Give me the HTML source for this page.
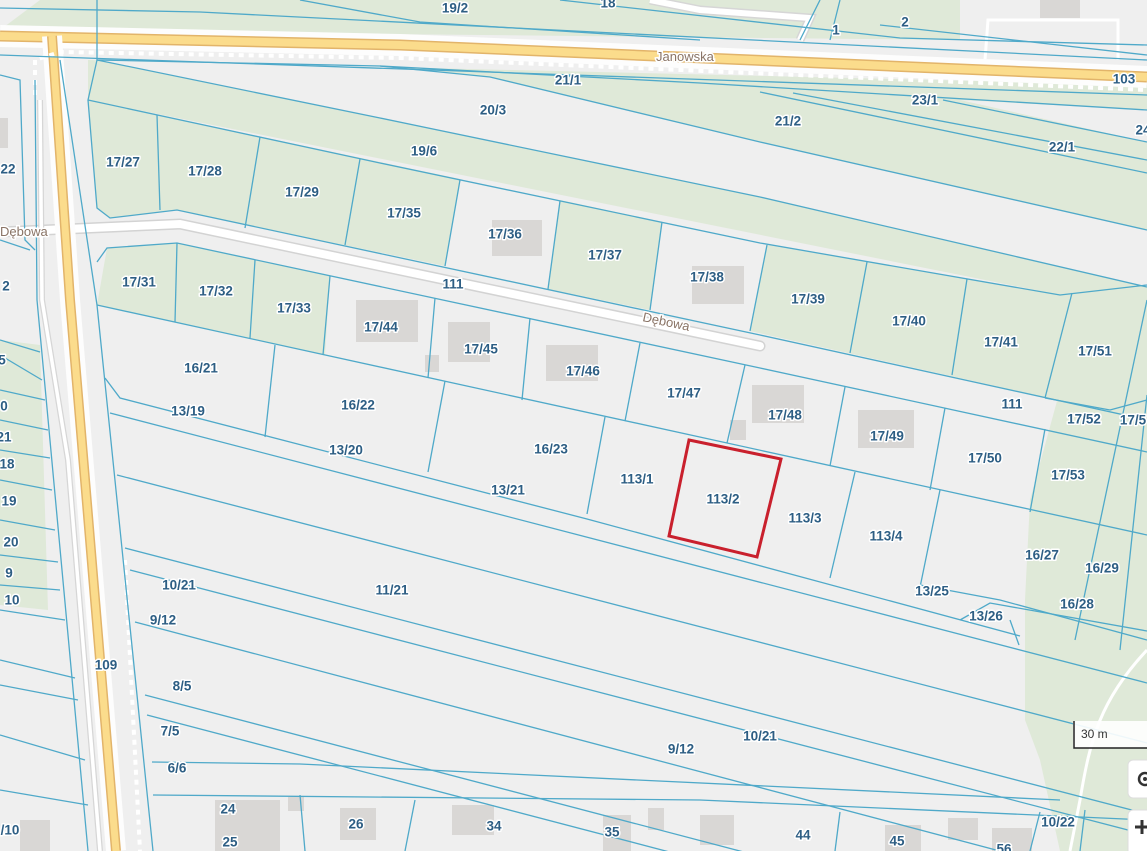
<!DOCTYPE html>
<html><head><meta charset="utf-8"><style>
html,body{margin:0;padding:0;width:1147px;height:851px;overflow:hidden;background:#efefef}
svg{display:block}
.l{fill:none;stroke:#4fa9c9;stroke-width:1.3}
.t{font-family:"Liberation Sans",sans-serif;font-weight:bold;font-size:13.5px;fill:#2d5e84;text-anchor:middle;dominant-baseline:central;paint-order:stroke;stroke:#fff;stroke-width:3px;stroke-linejoin:round}
.r{font-family:"Liberation Sans",sans-serif;font-size:13px;fill:#8a7466;paint-order:stroke;stroke:#fff;stroke-width:3px}
.g{fill:#dfe9d8}
.b{fill:#d9d7d5}
</style></head><body>
<svg width="1147" height="851" viewBox="0 0 1147 851">
<rect width="1147" height="851" fill="#efefef"/>
<polygon class="g" points="40,0 960,0 960,40 0,30"/>
<rect x="980" y="0" width="167" height="60" fill="#efefef"/>
<polygon class="g" points="88,60 1147,85 1147,300 1060,295 88,100"/>
<!-- gray strip 20/3 -->
<polygon fill="#efefef" points="97,60 380,66 490,77 760,142 1147,230 1147,287 760,197 380,118"/>
<polygon fill="#efefef" points="960,100 1147,110 1147,142"/>
<polygon class="g" points="88,100 460,179 445,266 177,210 110,218 97,208"/>
<polygon class="g" points="560,200 662,222 650,310 548,289"/>
<polygon class="g" points="767,245 1060,295 1147,290 1147,420 750,331"/>
<polygon class="g" points="107,248 177,243 330,276 325,355 97,305"/>
<polygon class="g" points="1060,390 1147,380 1147,851 1060,851 1040,760 1025,720 1025,600 1030,500"/>
<polygon class="g" points="0,340 40,345 48,610 0,605"/>
<rect class="b" x="492" y="220" width="50" height="36"/>
<rect class="b" x="692" y="266" width="52" height="38"/>
<rect class="b" x="356" y="300" width="62" height="42"/>
<rect class="b" x="448" y="322" width="42" height="40"/>
<rect class="b" x="425" y="355" width="14" height="17"/>
<rect class="b" x="546" y="345" width="52" height="36"/>
<rect class="b" x="752" y="385" width="52" height="38"/>
<rect class="b" x="730" y="420" width="16" height="20"/>
<rect class="b" x="858" y="410" width="56" height="38"/>
<rect class="b" x="215" y="800" width="65" height="51"/>
<rect class="b" x="288" y="797" width="16" height="14"/>
<rect class="b" x="340" y="808" width="36" height="32"/>
<rect class="b" x="452" y="805" width="42" height="30"/>
<rect class="b" x="603" y="815" width="28" height="36"/>
<rect class="b" x="648" y="808" width="16" height="22"/>
<rect class="b" x="700" y="815" width="34" height="30"/>
<rect class="b" x="885" y="825" width="36" height="26"/>
<rect class="b" x="948" y="818" width="30" height="22"/>
<rect class="b" x="992" y="828" width="40" height="23"/>
<rect class="b" x="20" y="820" width="30" height="31"/>
<rect class="b" x="1040" y="0" width="40" height="18"/>
<rect class="b" x="0" y="118" width="8" height="30"/>
<polyline points="0,232 180,224 760,346" fill="none" stroke="#d3d3d3" stroke-width="11" stroke-linecap="round"/>
<polyline points="0,232 180,224 760,346" fill="none" stroke="#ffffff" stroke-width="8" stroke-linecap="round"/>
<polyline points="40,100 42,300 68,460 100,851" fill="none" stroke="#d6d6d6" stroke-width="6"/>
<polyline points="40,100 42,300 68,460 100,851" fill="none" stroke="#fff" stroke-width="3.5"/>
<polyline points="650,0 700,10 810,18 800,40" fill="none" stroke="#d6d6d6" stroke-width="9"/>
<polyline points="650,0 700,10 810,18 800,40" fill="none" stroke="#fff" stroke-width="6"/>
<polyline points="985,60 988,20 1118,20 1118,60" fill="none" stroke="#fff" stroke-width="3"/>
<path d="M1147,650 C1100,700 1090,740 1080,800 L1070,851" fill="none" stroke="#fff" stroke-width="3"/>
<polyline points="0,36 400,45 1147,77" fill="none" stroke="#fdfdfd" stroke-width="22"/>
<polyline points="0,36 400,45 1147,77" fill="none" stroke="#e2b46a" stroke-width="11"/>
<polyline points="0,36 400,45 1147,77" fill="none" stroke="#fbdc8c" stroke-width="8"/>
<polyline points="52,36 70,300 116,851" fill="none" stroke="#fdfdfd" stroke-width="20"/>
<polyline points="52,36 70,300 116,851" fill="none" stroke="#e2b46a" stroke-width="10"/>
<polyline points="52,36 70,300 116,851" fill="none" stroke="#fbdc8c" stroke-width="7"/>
<polyline points="35,95 35,60 60,52 400,58 1147,90" fill="none" stroke="#fff" stroke-width="4" stroke-dasharray="5,5"/>
<polyline points="125,560 140,851" fill="none" stroke="#fff" stroke-width="4" stroke-dasharray="5,5"/>
<g class="l">
<polyline points="0,8 200,12 1147,60"/>
<polyline points="300,0 420,22 700,40"/>
<polyline points="560,0 900,38 1147,45"/>
<polyline points="820,0 800,40"/>
<polyline points="840,0 830,40"/>
<polyline points="880,25 1147,55"/>
<polyline points="0,55 1147,95"/>
<polyline points="97,60 380,66 700,83 1147,110"/>
<polyline points="97,60 380,118 760,197 1147,287"/>
<polyline points="380,66 490,77 760,142 1147,230"/>
<polyline points="760,92 1147,173"/>
<polyline points="793,93 1147,160"/>
<polyline points="943,100 1147,142"/>
<polyline points="97,60 88,100 97,208 110,218 177,210 760,335 1147,420"/>
<polyline points="88,100 380,163 760,243 1060,295 1147,285"/>
<line x1="157" y1="115" x2="160" y2="210"/>
<line x1="260" y1="137" x2="245" y2="228"/>
<line x1="360" y1="159" x2="345" y2="245"/>
<line x1="460" y1="180" x2="445" y2="266"/>
<line x1="560" y1="201" x2="548" y2="289"/>
<line x1="662" y1="222" x2="650" y2="310"/>
<line x1="767" y1="245" x2="750" y2="331"/>
<line x1="867" y1="262" x2="850" y2="353"/>
<line x1="967" y1="279" x2="952" y2="375"/>
<line x1="1072" y1="293" x2="1045" y2="398"/>
<polyline points="97,262 107,248 177,243 760,368 1147,452"/>
<polyline points="97,305 1147,535"/>
<line x1="177" y1="243" x2="175" y2="322"/>
<line x1="255" y1="260" x2="250" y2="338"/>
<line x1="330" y1="276" x2="323" y2="355"/>
<line x1="435" y1="298" x2="428" y2="378"/>
<line x1="530" y1="318" x2="522" y2="400"/>
<line x1="640" y1="343" x2="625" y2="421"/>
<line x1="745" y1="365" x2="727" y2="443"/>
<line x1="845" y1="387" x2="830" y2="466"/>
<line x1="945" y1="408" x2="930" y2="490"/>
<line x1="1045" y1="429" x2="1030" y2="512"/>
<line x1="1147" y1="395" x2="1120" y2="650"/>
<line x1="1147" y1="300" x2="1075" y2="640"/>
<polyline points="1045,398 1110,410 1147,400"/>
<polyline points="105,378 120,398 587,519 1020,636"/>
<polyline points="110,413 1147,683"/>
<polyline points="117,475 1147,743"/>
<polyline points="125,548 1147,814"/>
<polyline points="130,570 1147,835"/>
<polyline points="135,622 1147,890"/>
<polyline points="145,695 900,893"/>
<polyline points="147,715 700,860"/>
<polyline points="152,762 300,764 1060,800"/>
<polyline points="153,795 700,800 1147,820"/>
<line x1="275" y1="345" x2="265" y2="437"/>
<line x1="445" y1="381" x2="428" y2="472"/>
<line x1="605" y1="417" x2="587" y2="514"/>
<line x1="855" y1="472" x2="830" y2="578"/>
<line x1="940" y1="490" x2="918" y2="597"/>
<polyline points="920,585 1000,600 1147,640"/>
<polyline points="960,620 990,603 1147,631"/>
<polyline points="1010,620 1019,645"/>
<polyline points="97,0 97,60"/>
<polyline points="35,80 37,300 88,851"/>
<polyline points="60,60 97,305 153,851"/>
<polyline points="0,75 20,80 25,240 35,250"/>
<polyline points="0,240 30,250"/>
<polyline points="0,340 40,352"/><polyline points="0,355 42,380"/><polyline points="0,390 45,400"/><polyline points="0,420 48,430"/>
<polyline points="0,450 50,458"/><polyline points="0,480 52,490"/><polyline points="0,520 55,530"/><polyline points="0,555 58,562"/>
<polyline points="0,585 60,590"/><polyline points="0,610 65,620"/>
<polyline points="0,660 75,678"/><polyline points="0,685 78,700"/><polyline points="0,735 85,760"/><polyline points="0,790 88,805"/>
<line x1="415" y1="800" x2="405" y2="851"/><line x1="300" y1="795" x2="305" y2="851"/><line x1="840" y1="812" x2="835" y2="851"/>
<line x1="1040" y1="812" x2="1030" y2="851"/><line x1="1085" y1="810" x2="1080" y2="851"/>
</g>
<polygon points="689,440 781,459 757,557 669,536" fill="none" stroke="#c9202d" stroke-width="3"/>
<g class="t">
<text x="455" y="8">19/2</text><text x="608" y="3">18</text><text x="905" y="22">2</text><text x="836" y="30">1</text>
<text x="1124" y="79">103</text><text x="568" y="80">21/1</text><text x="493" y="110">20/3</text><text x="925" y="100">23/1</text>
<text x="788" y="121">21/2</text><text x="1143" y="130">24</text><text x="1062" y="147">22/1</text><text x="424" y="151">19/6</text>
<text x="123" y="162">17/27</text><text x="205" y="171">17/28</text><text x="302" y="192">17/29</text><text x="404" y="213">17/35</text>
<text x="505" y="234">17/36</text><text x="605" y="255">17/37</text><text x="707" y="277">17/38</text><text x="808" y="299">17/39</text>
<text x="909" y="321">17/40</text><text x="1001" y="342">17/41</text><text x="1095" y="351">17/51</text><text x="8" y="169">22</text>
<text x="6" y="286">2</text><text x="139" y="282">17/31</text><text x="216" y="291">17/32</text><text x="294" y="308">17/33</text>
<text x="453" y="284">111</text><text x="381" y="327">17/44</text><text x="481" y="349">17/45</text><text x="583" y="371">17/46</text>
<text x="684" y="393">17/47</text><text x="785" y="415">17/48</text><text x="887" y="436">17/49</text><text x="985" y="458">17/50</text>
<text x="1012" y="404">111</text><text x="1084" y="419">17/52</text><text x="1133" y="420">17/5</text><text x="1068" y="475">17/53</text>
<text x="201" y="368">16/21</text><text x="188" y="411">13/19</text><text x="358" y="405">16/22</text><text x="551" y="449">16/23</text>
<text x="346" y="450">13/20</text><text x="637" y="479">113/1</text><text x="723" y="499">113/2</text><text x="805" y="518">113/3</text>
<text x="886" y="536">113/4</text><text x="508" y="490">13/21</text><text x="1042" y="555">16/27</text><text x="1102" y="568">16/29</text>
<text x="932" y="591">13/25</text><text x="1077" y="604">16/28</text><text x="986" y="616">13/26</text><text x="179" y="585">10/21</text>
<text x="392" y="590">11/21</text><text x="163" y="620">9/12</text><text x="182" y="686">8/5</text><text x="106" y="665">109</text>
<text x="170" y="731">7/5</text><text x="760" y="736">10/21</text><text x="681" y="749">9/12</text><text x="177" y="768">6/6</text>
<text x="228" y="809">24</text><text x="230" y="842">25</text><text x="356" y="824">26</text><text x="494" y="826">34</text>
<text x="612" y="832">35</text><text x="803" y="835">44</text><text x="897" y="841">45</text><text x="1004" y="849">56</text>
<text x="1058" y="822">10/22</text><text x="10" y="830">/10</text>
<text x="2" y="360">5</text><text x="4" y="406">0</text><text x="4" y="437">21</text><text x="7" y="464">18</text>
<text x="9" y="501">19</text><text x="11" y="542">20</text><text x="9" y="573">9</text><text x="12" y="600">10</text>
</g>
<text class="r" x="656" y="61">Janowska</text>
<text class="r" x="0" y="236">Dębowa</text>
<text class="r" x="642" y="321" transform="rotate(12 642 321)">Dębowa</text>
<rect x="1073" y="721" width="80" height="27" fill="#fff" fill-opacity="0.9"/>
<polyline points="1074,721 1074,748 1147,748" fill="none" stroke="#222" stroke-width="1.5"/>
<text x="1081" y="738" font-family="Liberation Sans,sans-serif" font-size="12" fill="#333">30 m</text>
<rect x="1128" y="760" width="30" height="38" rx="5" fill="#fff" stroke="#ddd"/>
<circle cx="1145" cy="779" r="6" fill="none" stroke="#333" stroke-width="2.5"/>
<circle cx="1145" cy="779" r="2" fill="#333"/>
<rect x="1128" y="810" width="30" height="45" rx="5" fill="#fff" stroke="#ddd"/>
<path d="M1142,820 v14 M1135,827 h14" stroke="#333" stroke-width="3"/>
</svg>
</body></html>
